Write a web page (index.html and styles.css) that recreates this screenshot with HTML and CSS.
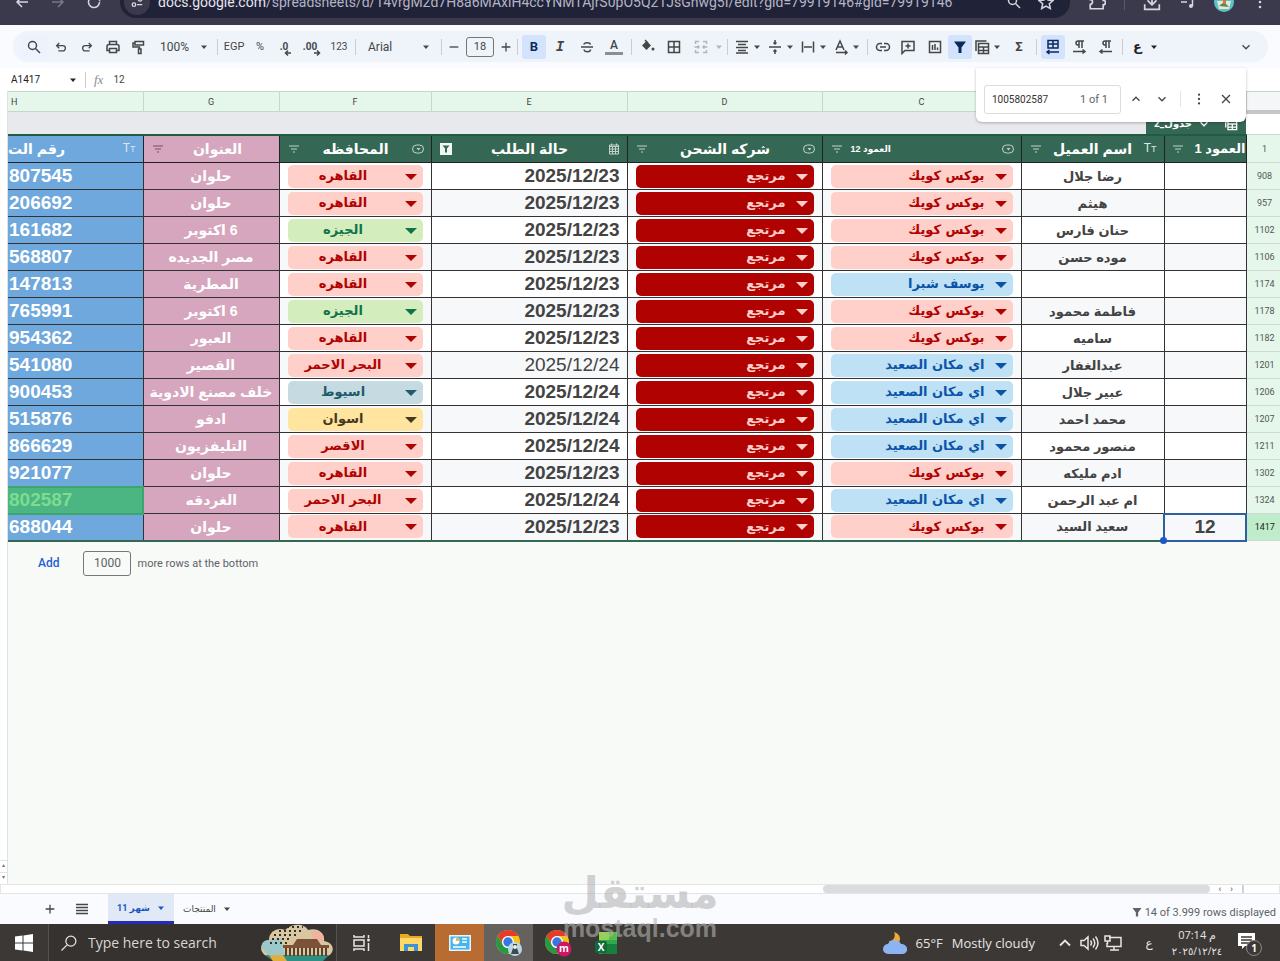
FILE: index.html
```html
<!DOCTYPE html>
<html lang="en">
<head>
<meta charset="utf-8">
<title>Orders sheet</title>
<link rel="stylesheet" href="styles.css">
</head>
<body>
<svg class="defs" aria-hidden="true">
  <symbol id="search" viewBox="0 0 16 16"><circle cx="6.5" cy="6.5" r="4"/><path d="M9.5 9.5L14 14"/></symbol>
  <symbol id="undo" viewBox="0 0 16 16"><path d="M6 3.500L3 6.500L6 9.500M3.500 6.500H10a3 3 0 0 1 0 6H5"/></symbol>
  <symbol id="redo" viewBox="0 0 16 16"><path d="M10 3.500L13 6.500L10 9.500M12.500 6.500H6a3 3 0 0 0 0 6H11"/></symbol>
  <symbol id="print" viewBox="0 0 16 16"><path d="M4.500 5.500V2.500h7v3M4.500 11.500h-2.500v-4q0-2 2-2h8q2 0 2 2v4h-2.500M4.500 9.500h7v4h-7z"/></symbol>
  <symbol id="paint" viewBox="0 0 16 16"><path d="M4 2.500h8.500v3.500h-8.500zM4 4H2v4h6.500v2M7.500 10h2.500v4.500h-2.500z"/></symbol>
  <symbol id="caret" viewBox="0 0 8 8"><path class="solid" d="M1 2.500h6L4 6z"/></symbol>
  <symbol id="minus" viewBox="0 0 16 16"><path d="M3 8h10"/></symbol>
  <symbol id="plus" viewBox="0 0 16 16"><path d="M3 8h10M8 3v10"/></symbol>
  <symbol id="strike" viewBox="0 0 16 16"><path d="M2 8h12M11.500 5.500C11 3 5 3 5 5.500M5 10.500c.5 3 6.500 3 6.500 0"/></symbol>
  <symbol id="fill" viewBox="0 0 16 16"><path class="solid" d="M2 6.500l4.500-4.500 4.500 4.500-4.500 4.500z"/><path d="M5 1l3 3"/><circle class="solid" cx="13" cy="10" r="1.500"/></symbol>
  <symbol id="grid" viewBox="0 0 16 16"><path d="M2.500 2.500h11v11h-11zM8 2.500v11M2.500 8h11"/></symbol>
  <symbol id="merge" viewBox="0 0 16 16"><path d="M6 2.500H2.500V5M2.500 11v2.500H6M10 2.500h3.500V5M13.500 11v2.500H10M1.500 8H6M4.500 6.500L6 8L4.500 9.500M14.500 8H10M11.500 6.500L10 8l1.500 1.500"/></symbol>
  <symbol id="align" viewBox="0 0 16 16"><path d="M2 2.500h12M4 5.500h8M2 8.500h12M4 11.500h8M2 14h12"/></symbol>
  <symbol id="valign" viewBox="0 0 16 16"><path d="M2 8h12M8 1v4M6.500 3.500L8 5l1.500-1.500M8 15v-4M6.500 12.500L8 11l1.500 1.500"/></symbol>
  <symbol id="wrap" viewBox="0 0 16 16"><path d="M2.500 2.500v11M13.500 2.500v11M4 8h8"/></symbol>
  <symbol id="rotate" viewBox="0 0 16 16"><path d="M3 11l4-9 4 9M4.500 8h5M3 13.500h11M12 11.500l2 2l-2 2"/></symbol>
  <symbol id="link" viewBox="0 0 16 16"><path d="M7 4.500H5a3.500 3.500 0 0 0 0 7H7M9 4.500h2a3.500 3.500 0 0 1 0 7H9M5 8h6"/></symbol>
  <symbol id="comment" viewBox="0 0 16 16"><path d="M2 2.500h12v9H5l-3 3zM8 4.500v5M5.500 7h5"/></symbol>
  <symbol id="chart" viewBox="0 0 16 16"><path d="M2.500 2.500h11v11h-11zM5.500 6v5M8 5v6M10.500 8.500V11"/></symbol>
  <symbol id="funnel" viewBox="0 0 16 16"><path class="solid" d="M2 2.500h12L9.500 8.500V14h-3V8.500z"/></symbol>
  <symbol id="tables" viewBox="0 0 16 16"><path d="M4.500 4.500h10v10h-10zM4.500 8h10M4.500 11.500h10M9.500 8v6.500M2 12V2h10.500"/></symbol>
  <symbol id="rtlsheet" viewBox="0 0 16 16"><path d="M3 1.500h10v7.500H3zM8 1.500V9M3 5h10M2 13h12M4.500 11L2 13l2.500 2"/></symbol>
  <symbol id="paraR" viewBox="0 0 16 16"><path d="M8 9V2M11 9V2M13 2H7a2 2 0 0 0 0 4H8M2 12.500h12M11.500 10.500l2.500 2l-2.500 2"/></symbol>
  <symbol id="paraL" viewBox="0 0 16 16"><path d="M8 9V2M11 9V2M13 2H7a2 2 0 0 0 0 4H8M2 12.500h12M4.500 10.500L2 12.500l2.500 2"/></symbol>
  <symbol id="down" viewBox="0 0 16 16"><path d="M4 6l4 4 4-4"/></symbol>
  <symbol id="up" viewBox="0 0 16 16"><path d="M4 10l4-4 4 4"/></symbol>
  <symbol id="dots" viewBox="0 0 16 16"><circle class="solid" cx="8" cy="3" r="1.300"/><circle class="solid" cx="8" cy="8" r="1.300"/><circle class="solid" cx="8" cy="13" r="1.300"/></symbol>
  <symbol id="close" viewBox="0 0 16 16"><path d="M3.500 3.500l9 9M12.500 3.500l-9 9"/></symbol>
  <symbol id="lines" viewBox="0 0 16 16"><path d="M2 3.500h12M2 6.500h12M2 9.500h12M2 12.500h12"/></symbol>
  <symbol id="sort" viewBox="0 0 12 12"><path d="M1 3h10M3 6h6M5 9h2"/></symbol>
  <symbol id="chipicon" viewBox="0 0 12 12"><rect x=".5" y="2" width="11" height="8" rx="4"/><path class="solid" d="M4.500 5h4L6.500 7.500z"/></symbol>
  <symbol id="boxfunnel" viewBox="0 0 12 12"><path class="solid" fill-rule="evenodd" d="M0 0h12v12H0zM2.500 2.500l2.500 3v4h2v-4l2.500-3z"/></symbol>
  <symbol id="cal" viewBox="0 0 12 12"><path d="M1.500 2h9v9h-9zM1.500 3.500h9M1.500 6h9M1.500 8.500h9M4.500 4v7M7.500 4v7M3.500 .5v2M8.500 .5v2"/></symbol>
  <symbol id="back" viewBox="0 0 16 16"><path d="M14 8H3M8 3L3 8l5 5"/></symbol>
  <symbol id="fwd" viewBox="0 0 16 16"><path d="M2 8h11M8 3l5 5-5 5"/></symbol>
  <symbol id="reload" viewBox="0 0 16 16"><path d="M13.500 8a5.500 5.500 0 1 1-2-4.200L13.500 6V2"/></symbol>
  <symbol id="tune" viewBox="0 0 16 16"><path d="M2 5h6M8 11h6"/><circle cx="11.500" cy="5" r="2"/><circle cx="4.500" cy="11" r="2"/></symbol>
  <symbol id="star" viewBox="0 0 16 16"><path d="M8 1.500l2 4.500 5 .5-3.700 3.200L12.300 14.500 8 12l-4.300 2.500 1-4.800L1 6.500 6 6z"/></symbol>
  <symbol id="ext" viewBox="0 0 16 16"><path d="M2 14V10a2 2 0 0 0 0-4V3h4a2 2 0 0 1 4 0h3.500v3.500a2 2 0 0 1 0 4V14z"/></symbol>
  <symbol id="download" viewBox="0 0 16 16"><path d="M8 1v9M4 6.500l4 4 4-4M1.500 10v4.500h13V10"/></symbol>
  <symbol id="media" viewBox="0 0 16 16"><path d="M1 4h8M1 8h6M12.500 12V4h3"/><circle class="solid" cx="11" cy="12" r="2"/></symbol>
  <symbol id="chrome" viewBox="0 0 26 26"><circle cx="13" cy="13" r="12" fill="#fbc116"/><path fill="#e33b2e" d="M2.600 7A12 12 0 0 1 23.400 7H13a6 6 0 0 0-5.500 8z"/><path fill="#269848" d="M2.600 7A12 12 0 0 0 13 25l5-8.500a6 6 0 0 1-10.200-.5z"/><circle cx="13" cy="13" r="6" fill="#fff"/><circle cx="13" cy="13" r="4.700" fill="#3578e5"/></symbol>
</svg>

<header class="browser">
  <div class="browser-row">
    <button class="nav" aria-label="Back"><svg class="ic i16"><use href="#back"/></svg></button>
    <button class="nav dim" aria-label="Forward"><svg class="ic i16"><use href="#fwd"/></svg></button>
    <button class="nav" aria-label="Reload"><svg class="ic i16"><use href="#reload"/></svg></button>
    <div class="address">
      <span class="site"><svg class="ic i14"><use href="#tune"/></svg></span>
      <span class="url"><b>docs.google.com</b>/spreadsheets/d/14vrgM2d7H8a6MAxiH4ccYNMTAjrS0pO5Q21JsGhwg5I/edit?gid=79919146#gid=79919146</span>
      <svg class="ic i16"><use href="#search"/></svg>
      <svg class="ic i16"><use href="#star"/></svg>
    </div>
    <div class="browser-tools">
      <svg class="ic i18"><use href="#ext"/></svg>
      <i class="bar"></i>
      <svg class="ic i18"><use href="#download"/></svg>
      <svg class="ic i16"><use href="#media"/></svg>
      <svg class="avatar" viewBox="0 0 20 20"><circle cx="10" cy="10" r="10" fill="#56c5c9"/><path d="M3 9h14l-2 8H5z" fill="#e9e5d6"/><path d="M5 14l5-4 5 5z" fill="#5c8a4d"/><path d="M9 6h3v6H9z" fill="#c6784c"/></svg>
      <svg class="ic i16"><use href="#dots"/></svg>
    </div>
  </div>
</header>

<nav class="toolbar-wrap">
  <div class="toolbar">
    <button class="w28 find-menu" aria-label="Search menus"><svg class="ic i16"><use href="#search"/></svg></button>
    <button class="w26" aria-label="Undo"><svg class="ic i14"><use href="#undo"/></svg></button>
    <button class="w26" aria-label="Redo"><svg class="ic i14"><use href="#redo"/></svg></button>
    <button class="w26" aria-label="Print"><svg class="ic i16"><use href="#print"/></svg></button>
    <button class="w26" aria-label="Paint format"><svg class="ic i16"><use href="#paint"/></svg></button>
    <button class="menu zoom">100% <svg class="ic i8"><use href="#caret"/></svg></button>
    <i class="sep"></i>
    <button class="w24 sm">EGP</button>
    <button class="w28 sm">%</button>
    <button class="w24 dec" aria-label="Decrease decimal places">.0<svg class="ic i8"><use href="#back"/></svg></button>
    <button class="w28 dec" aria-label="Increase decimal places">.00<svg class="ic i8"><use href="#fwd"/></svg></button>
    <button class="w26 xs">123</button>
    <i class="sep"></i>
    <button class="menu font">Arial <svg class="ic i8"><use href="#caret"/></svg></button>
    <i class="sep"></i>
    <button class="w16" aria-label="Decrease font size"><svg class="ic i14"><use href="#minus"/></svg></button>
    <input class="size" aria-label="Font size" value="18">
    <button class="w16" aria-label="Increase font size"><svg class="ic i14"><use href="#plus"/></svg></button>
    <i class="sep"></i>
    <button class="w24 on"><b>B</b></button>
    <button class="w28 ital">I</button>
    <button class="w26" aria-label="Strikethrough"><svg class="ic i16"><use href="#strike"/></svg></button>
    <button class="w28"><span class="color-a">A</span></button>
    <i class="sep"></i>
    <button class="w24" aria-label="Fill color"><svg class="ic i16"><use href="#fill"/></svg></button>
    <button class="w28" aria-label="Borders"><svg class="ic i16"><use href="#grid"/></svg></button>
    <button class="w26 off" aria-label="Merge cells"><svg class="ic i16"><use href="#merge"/></svg></button>
    <button class="w10 off" aria-label="Merge type"><svg class="ic i8"><use href="#caret"/></svg></button>
    <i class="sep"></i>
    <button class="combo" aria-label="Horizontal align"><svg class="ic i16"><use href="#align"/></svg><svg class="ic i8"><use href="#caret"/></svg></button>
    <button class="combo" aria-label="Vertical align"><svg class="ic i16"><use href="#valign"/></svg><svg class="ic i8"><use href="#caret"/></svg></button>
    <button class="combo" aria-label="Text wrapping"><svg class="ic i16"><use href="#wrap"/></svg><svg class="ic i8"><use href="#caret"/></svg></button>
    <button class="combo" aria-label="Text rotation"><svg class="ic i16"><use href="#rotate"/></svg><svg class="ic i8"><use href="#caret"/></svg></button>
    <i class="sep"></i>
    <button class="w22" aria-label="Insert link"><svg class="ic i16"><use href="#link"/></svg></button>
    <button class="w28" aria-label="Insert comment"><svg class="ic i16"><use href="#comment"/></svg></button>
    <button class="w26" aria-label="Insert chart"><svg class="ic i16"><use href="#chart"/></svg></button>
    <button class="w24 on" aria-label="Filter"><svg class="ic i16"><use href="#funnel"/></svg></button>
    <button class="combo end" aria-label="Table views"><svg class="ic i16"><use href="#tables"/></svg><svg class="ic i8"><use href="#caret"/></svg></button>
    <button class="w28"><b>Σ</b></button>
    <i class="sep"></i>
    <button class="w24 on" aria-label="Sheet direction"><svg class="ic i16"><use href="#rtlsheet"/></svg></button>
    <button class="w28" aria-label="Left to right"><svg class="ic i16"><use href="#paraR"/></svg></button>
    <button class="w26" aria-label="Right to left"><svg class="ic i16"><use href="#paraL"/></svg></button>
    <i class="sep"></i>
    <button class="combo input-tools"><b>ع</b><svg class="ic i8"><use href="#caret"/></svg></button>
    <button class="w24 more" aria-label="Hide the menus"><svg class="ic i14"><use href="#down"/></svg></button>
  </div>
</nav>

<div class="formula">
  <button class="name-box">A1417 <svg class="ic i8"><use href="#caret"/></svg></button>
  <i class="sep"></i>
  <label class="fx" for="formula">fx</label>
  <input id="formula" class="formula-input" value="12">
</div>

<main class="sheet">
  <div class="gutter"><span>▴</span><span>▾</span></div>
  <div class="canvas">
    <table class="grid">
      <colgroup><col class="cH"><col class="cG"><col class="cF"><col class="cE"><col class="cD"><col class="cC"><col class="cB"><col class="cA"><col class="cN"></colgroup>
      <thead>
        <tr class="letters"><th class="first">H</th><th>G</th><th>F</th><th>E</th><th>D</th><th>C</th><th></th><th></th><th class="corner"></th></tr>
        <tr class="spacer"><td colspan="8"><div class="table-tab"><span dir="rtl">جدول_2</span><svg class="ic i14"><use href="#down"/></svg><svg class="ic i14 tab-grid"><use href="#tables"/></svg></div></td><td class="blank"></td></tr>
        <tr class="heads">
          <th class="blue"><div class="head"><span class="cut" dir="rtl">رقم الت</span><span class="tt">T<small>T</small></span></div></th>
          <th class="pink"><div class="head"><svg class="ic i12"><use href="#sort"/></svg><span>العنوان</span></div></th>
          <th><div class="head"><svg class="ic i12"><use href="#sort"/></svg><span>المحافظه</span><svg class="ic i12"><use href="#chipicon"/></svg></div></th>
          <th><div class="head"><svg class="ic i12 bright"><use href="#boxfunnel"/></svg><span>حالة الطلب</span><svg class="ic i12"><use href="#cal"/></svg></div></th>
          <th><div class="head"><svg class="ic i12"><use href="#sort"/></svg><span>شركه الشحن</span><svg class="ic i12"><use href="#chipicon"/></svg></div></th>
          <th><div class="head"><svg class="ic i12"><use href="#sort"/></svg><span class="little" dir="rtl">العمود 12</span><svg class="ic i12"><use href="#chipicon"/></svg></div></th>
          <th><div class="head"><svg class="ic i12"><use href="#sort"/></svg><span>اسم العميل</span><span class="tt">T<small>T</small></span></div></th>
          <th><div class="head tight"><svg class="ic i12"><use href="#sort"/></svg><span dir="rtl">العمود 1</span></div></th>
          <th class="num">1</th>
        </tr>
      </thead>
      <tbody id="rows"></tbody>
    </table>
    <form class="add-rows">
      <button type="button">Add</button>
      <input id="count" value="1000">
      <label for="count">more rows at the bottom</label>
    </form>
  </div>
  <section class="finder" aria-label="Find in sheet">
    <label class="find-box"><input aria-label="Find" value="1005802587"><span>1 of 1</span></label>
    <button aria-label="Previous"><svg class="ic i14"><use href="#up"/></svg></button>
    <button aria-label="Next"><svg class="ic i14"><use href="#down"/></svg></button>
    <i class="sep"></i>
    <button aria-label="More options"><svg class="ic i14"><use href="#dots"/></svg></button>
    <button aria-label="Close"><svg class="ic i14"><use href="#close"/></svg></button>
  </section>
</main>

<div class="hscroll"><div class="thumb"></div><span>‹</span><span>›</span><i></i></div>

<footer class="tabs">
  <button class="tool" aria-label="Add sheet"><svg class="ic i14"><use href="#plus"/></svg></button>
  <button class="tool" aria-label="All sheets"><svg class="ic i16"><use href="#lines"/></svg></button>
  <button class="tab active"><span dir="rtl">شهر 11</span><svg class="ic i8"><use href="#caret"/></svg></button>
  <button class="tab"><span>المنتجات</span><svg class="ic i8"><use href="#caret"/></svg></button>
  <p class="count"><svg class="ic i12"><use href="#funnel"/></svg>14 of 3.999 rows displayed</p>
</footer>

<footer class="taskbar">
  <button class="start" aria-label="Start"><svg viewBox="0 0 18 18"><path fill="#fff" d="M0 2.500l7.500-1V8.500H0zM8.500 1.400L18 0v8.500H8.500zM0 9.500h7.500v7L0 15.500zM8.500 9.500H18V18l-9.500-1.400z"/></svg></button>
  <label class="task-search"><svg class="ic i20 flip"><use href="#search"/></svg><input aria-label="Search" placeholder="Type here to search">
    <svg class="art" viewBox="0 0 72 37"><path fill="#d9c7a1" d="M8 33C-3 30-2 17 8 16 8 7 17 3 24 6 32-2 44 0 47 6c10-3 17 3 16 11 12 2 11 14 1 16z"/><path fill="#9cc7cb" d="M1 24c-1-6 3-8 7-8l12-2 4 18H8z"/><path fill="#efb3a0" d="M50 8c8-3 14 2 13 9l-10 1z"/><path fill="#2f8f83" d="M4 31h64l-6 6H12z"/><path fill="#e0ad3e" d="M8 31h14l4 6H12z"/><path fill="#7b5137" d="M36 15h20l4 6h8v3H22v-3h10z"/><path stroke="#5b3e2c" stroke-width="2" d="M25 24v8M29 24v8M33 24v8M37 24v8M41 24v8M45 24v8M49 24v8M53 24v8M57 24v8M61 24v8M65 24v8"/><path stroke="#33302c" stroke-width="2" stroke-dasharray="2 3" d="M9 19h18M11 15h20M13 11h24M18 7h24M26 3h16"/></svg>
  </label>
  <div class="apps">
    <button aria-label="Task view"><svg class="ic i20" viewBox="0 0 20 20"><path d="M2 2v2h10V2M2 7h10v6H2zM2 18v-2h10v2M16.500 2v3M16.500 10v8"/><circle class="solid" cx="16.500" cy="7" r="1.500"/></svg></button>
    <button aria-label="File Explorer"><svg class="i24" viewBox="0 0 24 24"><path fill="#e9a820" d="M1 3h8l2 2h12v5H1z"/><path fill="#ffd766" d="M1 7h22v13H1z"/><path fill="#3a94d6" d="M5 20v-7h14v7h-4v-4H9v4z"/></svg></button>
    <button class="orange" aria-label="Control Panel"><svg class="i24" viewBox="0 0 24 24"><path fill="#e4f5ff" d="M1 4h22v16H1z"/><path fill="#45b5ed" d="M2.500 5.500h19v13h-19z"/><circle cx="8" cy="10" r="3.500" fill="#fff"/><path fill="#f4b63f" d="M8 10V6.500A3.500 3.500 0 0 1 11.500 10z"/><path stroke="#fff" stroke-width="1.500" d="M14 8h5M14 11h5M5 16h13"/></svg></button>
    <button class="lit" aria-label="Chrome"><svg class="i28" viewBox="0 0 28 28"><use href="#chrome" width="26" height="26"/><circle cx="20" cy="20" r="7" fill="#b9d7e4"/><path fill="#3e4a50" d="M18 15h4v4l2 6h-8l2-6z"/><circle cx="20" cy="18" r="2" fill="#f4f1e6"/></svg></button>
    <button aria-label="Chrome, second profile"><svg class="i28" viewBox="0 0 28 28"><use href="#chrome" width="26" height="26"/><circle cx="20" cy="20" r="7.500" fill="#cf1665"/><text x="20" y="23" text-anchor="middle" class="badge">m</text></svg></button>
    <button aria-label="Excel"><svg class="i28" viewBox="0 0 28 28"><path fill="#2fa84f" d="M6 3h18v22H6z"/><path fill="#8fd44a" d="M6 3h10v8H6z"/><path fill="#57bd45" d="M16 3h8v8h-8z"/><path fill="#16803c" d="M14 15h10v10H8z"/><rect x="2" y="12" width="12" height="12" rx="2" fill="#12693a"/><text x="8" y="22" text-anchor="middle" class="badge">X</text></svg></button>
  </div>
  <div class="tray">
    <svg class="weather" viewBox="0 0 26 26"><path fill="#f2a93b" d="M12 2c2 4 0 9-5 9 2 5 11 4 11-2 0-4-3-6-6-7z"/><path fill="#8db4f2" d="M6 24a5 5 0 0 1 0-10c2-5 11-5 13 0 8 0 8 10 1 10z"/></svg>
    <span>65°F</span><span class="outlook">Mostly cloudy</span>
    <svg class="ic i20"><use href="#up"/></svg>
    <svg class="ic i20" viewBox="0 0 20 20"><path d="M2 7.500h3L9 4v12l-4-3.500H2zM11.500 7.500q2 2.500 0 5M14 5.500q3.500 4.500 0 9M16.500 3.500q5 6.500 0 13"/></svg>
    <svg class="ic i20" viewBox="0 0 20 20"><path d="M6 4.500h12v9H4V10M11 13.500v3M7 17h9M2 3h5v5H2zM4.500 8v3"/></svg>
    <span class="lang">ع</span>
    <div class="clock"><span dir="rtl">م 07:14</span><span>٢٠٢٥/١٢/٢٤</span></div>
    <svg class="notes" viewBox="0 0 26 26"><path fill="#fff" d="M1 3h17v13H8l-3 3v-3H1z"/><path stroke="#3b3835" stroke-width="1.500" d="M4 7h11M4 10h11M4 13h8"/><circle cx="17" cy="18" r="7.500" fill="#3b3835" stroke="#8b8986"/><text x="17" y="22" text-anchor="middle" class="badge">1</text></svg>
  </div>
</footer>

<div class="watermark" aria-hidden="true"><span class="wm-ar">مستقل</span><span class="wm-en">mostaql.com</span></div>
<script src="rows.js"></script>
</body>
</html>
```
FILE: rows.js
```js
// phone, address, governorate, date, courier, customer, cell A, row number
const BOX = 'بوكس كويك', UPPER = 'اي مكان الصعيد', CAIRO = 'القاهره', GIZA = 'الجيزه', SEA = 'البحر الاحمر';
const orders = [
  ['807545', 'حلوان', CAIRO, 23, BOX, 'رضا جلال', '', 908],
  ['206692', 'حلوان', CAIRO, 23, BOX, 'هيثم', '', 957],
  ['161682', '6 اكتوبر', GIZA, 23, BOX, 'حنان فارس', '', 1102],
  ['568807', 'مصر الجديده', CAIRO, 23, BOX, 'موده حسن', '', 1106],
  ['147813', 'المطرية', CAIRO, 23, 'يوسف شبرا', '', '', 1174],
  ['765991', '6 اكتوبر', GIZA, 23, BOX, 'فاطمة محمود', '', 1178],
  ['954362', 'العبور', CAIRO, 23, BOX, 'ساميه', '', 1182],
  ['541080', 'القصير', SEA, 24, UPPER, 'عبدالغفار', '', 1201],
  ['900453', 'خلف مصنع الادوية', 'اسيوط', 24, UPPER, 'عبير جلال', '', 1206],
  ['515876', 'ادفو', 'اسوان', 24, UPPER, 'محمد احمد', '', 1207],
  ['866629', 'التليفزيون', 'الاقصر', 24, UPPER, 'منصور محمود', '', 1211],
  ['921077', 'حلوان', CAIRO, 23, BOX, 'ادم مليكه', '', 1302],
  ['802587', 'الغردقه', SEA, 24, UPPER, 'ام عبد الرحمن', '', 1324],
  ['688044', 'حلوان', CAIRO, 23, BOX, 'سعيد السيد', '12', 1417]
];
const tone = { [GIZA]: 'green', 'اسيوط': 'teal', 'اسوان': 'yellow', [UPPER]: 'azure', 'يوسف شبرا': 'azure' };

function chip(value, label, extra) {
  return `<div class="chip ${extra}"><select dir="rtl" aria-label="${label}"><option>${value}</option></select></div>`;
}

document.getElementById('rows').innerHTML = orders.map(([phone, area, gov, day, place, name, a, n]) => `
  <tr>
    <td class="blue${phone === '802587' ? ' found' : ''}">${phone}</td>
    <td class="pink" dir="rtl">${area}</td>
    <td>${chip(gov, 'المحافظه', 'mid ' + (tone[gov] || 'rose'))}</td>
    <td class="date${phone === '541080' ? ' plain' : ''}">2025/12/${day}</td>
    <td>${chip('مرتجع', 'شركه الشحن', 'red')}</td>
    <td>${chip(place, 'العمود 12', tone[place] || 'rose')}</td>
    <td class="name" dir="rtl">${name}</td>
    <td class="cell-a${a ? ' selected' : ''}">${a}</td>
    <td class="num${a ? ' current' : ''}">${n}</td>
  </tr>`).join('');
```
FILE: styles.css
```css
* { box-sizing: border-box; }
body {
  margin: 0;
  min-height: 100vh;
  display: flex;
  flex-direction: column;
  background: #f9fbfe;
  color: #444746;
  font-family: Roboto, "DejaVu Sans", sans-serif;
  font-size: 12px;
  overflow: hidden;
}
button, input, select { font: inherit; color: inherit; border: 0; background: none; padding: 0; margin: 0; }
.defs { display: none; }
.ic { fill: none; stroke: currentColor; stroke-width: 1.5; flex: none; }
.ic .solid, .solid { fill: currentColor; stroke: none; }
.i8 { width: 8px; height: 8px; }
.i12 { width: 12px; height: 12px; }
.i14 { width: 14px; height: 14px; }
.i16 { width: 16px; height: 16px; }
.i18 { width: 18px; height: 18px; }
.i20 { width: 20px; height: 20px; }
.i24 { width: 24px; height: 24px; }
.i28 { width: 28px; height: 28px; }

/* Browser bar */
.browser { height: 25px; overflow: hidden; background: #3b3a4c; color: #d6d6e0; flex: none; }
.browser-row { display: flex; align-items: center; height: 32px; margin-top: -14px; padding: 0 12px 0 4px; }
.nav { width: 36px; height: 24px; display: flex; align-items: center; justify-content: center; }
.dim { color: #77778a; }
.address { flex: 1; height: 32px; margin-left: 8px; padding: 0 16px 0 4px; border-radius: 16px; background: #202238; display: flex; align-items: center; gap: 16px; }
.site { width: 26px; height: 26px; border-radius: 50%; background: #3b3a4c; display: flex; align-items: center; justify-content: center; }
.url { flex: 1; margin-left: -8px; font-size: 14px; color: #b4b5c4; white-space: nowrap; }
.url b { font-weight: 400; color: #e6e6ee; }
.browser-tools { width: 198px; padding-left: 18px; display: flex; align-items: center; justify-content: space-between; }
.bar { width: 1px; height: 16px; background: #5a596c; }
.avatar { width: 20px; height: 20px; }

/* Toolbar */
.toolbar-wrap { padding: 6px 12px 6px 13px; flex: none; }
.toolbar { height: 31px; border-radius: 16px; background: #eff3fa; padding: 0 10px 0 7px; display: flex; align-items: center; }
.toolbar button { height: 24px; flex: none; display: flex; align-items: center; justify-content: center; border-radius: 3px; }
.toolbar .w10 { width: 10px; }
.toolbar .w16 { width: 16px; }
.toolbar .w22 { width: 22px; }
.toolbar .w24 { width: 24px; }
.toolbar .w26 { width: 26px; }
.toolbar .w28 { width: 28px; }
.toolbar .find-menu { background: #edf2fc; }
.toolbar .menu { justify-content: space-between; }
.toolbar .zoom { width: 62px; padding: 0 6px 0 8px; }
.toolbar .font { width: 78px; padding: 0 8px; }
.toolbar .sm { font-size: 11px; }
.toolbar .xs { font-size: 10px; }
.toolbar .dec { font-size: 10px; font-weight: 700; }
.dec svg { align-self: flex-end; margin: 0 0 2px -4px; stroke-width: 3; }
.sep { width: 1px; height: 16px; margin: 0 4px 0 3px; background: #c9ccd1; flex: none; }
.toolbar .on { background: #d3e3fd; color: #0b2a5c; }
.toolbar b { font-size: 13px; }
.toolbar .ital { font: italic 700 14px "Liberation Mono", monospace; }
.toolbar .off { color: #b3b6ba; }
.color-a { border-bottom: 3px solid #8b8e92; width: 18px; line-height: 13px; font-weight: 500; }
.size { width: 28px; height: 20px; margin: 0 4px; border: 1px solid #747775; border-radius: 3px; text-align: center; font-size: 11px; }
.toolbar .combo { width: 33px; gap: 3px; justify-content: flex-start; padding-left: 2px; }
.toolbar .end { justify-content: flex-end; padding-right: 4px; }
.toolbar .input-tools { gap: 8px; padding-left: 6px; color: #222; }
.toolbar .more { margin-left: auto; }

/* Formula bar */
.formula { height: 23px; background: #fff; display: flex; align-items: center; padding-left: 11px; flex: none; }
.name-box { width: 66px; display: flex; align-items: center; justify-content: space-between; font-size: 10px; color: #222; }
.formula .sep { margin: 0 8px; }
.fx { font: italic 13px "Liberation Serif", serif; color: #8a8d91; }
.formula-input { width: 200px; margin-left: 10px; font-size: 10px; }

/* Sheet */
.sheet { position: relative; flex: 1; display: flex; min-height: 0; }
.gutter { width: 8px; background: #fff; border-right: 1px solid #dfe1e3; display: flex; flex-direction: column; justify-content: flex-end; font-size: 6px; text-align: center; color: #777; }
.gutter span { height: 12px; border-top: 1px solid #e1e3e6; }
.canvas { flex: 1; background: #f7faf7; min-width: 0; }
.grid { width: 100%; table-layout: fixed; border-collapse: collapse; }
.cH { width: 135px; } .cG { width: 136px; } .cF { width: 152px; } .cE { width: 196px; } .cD { width: 195px; }
.cC { width: 199px; } .cB { width: 143px; } .cA { width: 82px; } .cN { width: 34px; }
.grid th, .grid td { padding: 0; height: 27px; overflow: hidden; white-space: nowrap; }
.letters th { height: 20px; background: #e4f7ea; border: 1px solid #c8d5cc; border-left: 0; font-size: 9px; font-weight: 400; color: #444; }
.grid .letters .first { text-align: left; padding-left: 3px; }
.letters .corner { background: #f5f6f8; border-bottom: 4px solid #c4c6c9; }
.grid .spacer td { height: 23px; background: #e8e9ed; vertical-align: bottom; }
.grid .spacer .blank { background: #fff; }
.table-tab { width: 100px; height: 20px; margin-left: auto; background: #356854; color: #fff; display: flex; align-items: center; justify-content: space-between; padding: 0 8px; font-size: 10px; font-weight: 700; }
.tab-grid { margin-left: 8px; }
.grid .heads th { height: 28px; background: #356854; color: #fff; border: 1px solid #222; border-top: 2px solid #205c40; font: 700 14px "Liberation Sans", "DejaVu Sans", sans-serif; }
.head { display: flex; align-items: center; padding: 0 7px 0 8px; line-height: 20px; }
.head span { flex: 1; text-align: center; }
.head .ic { color: #c3d3cb; stroke-width: 1; }
.head .bright { color: #f1f6f3; }
.head .cut { text-align: left; }
.head .little { font-size: 9px; text-align: left; padding-left: 8px; }
.head .tt { flex: none; font-weight: 400; font-size: 12px; color: #dde6f0; }
.tt small { font-size: 9px; }
.head.tight { padding: 0 0 0 7px; }
.head.tight span { text-align: right; font-size: 13px; }
.grid .heads .blue, .grid td.blue { background: #6fa8dc; }
.grid .heads .pink, .grid td.pink { background: #d5a6bd; }
.heads .blue .head { padding-left: 0; }
.heads .pink .ic { color: #7b4f65; }
tbody td { border: 1px solid #333; background: #fff; text-align: center; font: 700 14px "Liberation Sans", "DejaVu Sans", sans-serif; color: #434343; }
tbody tr:nth-child(even) td { background: #f6f8f9; }
.grid .blue, .grid tr > :first-child { border-left: 0; }
.grid tbody td.blue { color: #fff; font-size: 19px; text-align: left; padding-left: 1px; }
.grid tbody td.pink { color: #fff; }
.grid tbody tr td.found { background: #4bb682; color: #7ddc90; border: 2px solid #3fa56f; border-left: 0; }
.grid tbody .date { font-size: 19px; text-align: right; padding-right: 7px; }
.grid tbody .plain { font-weight: 400; }
.grid tbody .name { font-size: 13px; }
.grid tbody .cell-a { font-size: 19px; }
.grid tbody .selected { position: relative; overflow: visible; border: 2px solid #2f5f9e; }
.selected::after { content: ""; position: absolute; left: -5px; bottom: -4px; width: 7px; height: 7px; border-radius: 50%; background: #1b57c8; }
tbody tr:last-child td { border-bottom: 2px solid #356854; }
.grid .num, .grid tbody tr .num { background: #e4f7ea; border: 1px solid #cfd8d2; font: 400 9px Roboto, sans-serif; color: #555; padding-left: 3px; text-align: center; }
.grid .heads .num { background: #e4f7ea; border: 1px solid #cfd8d2; font: 400 9px Roboto, sans-serif; color: #555; }
.grid tbody tr .current { background: #bfecca; color: #222; }

/* Drop-down chips */
.chip { position: relative; height: 23px; margin: 0 8px; border-radius: 5px; }
.chip select { appearance: none; width: 100%; height: 23px; padding: 0 28px 0 0; display: block; font: 700 13px "DejaVu Sans", sans-serif; line-height: 20px; }
.chip.mid select { padding: 0 24px 0 0; text-align: center; text-align-last: center; }
.chip::after { content: ""; position: absolute; right: 6px; top: 9px; border: 6px solid transparent; border-top-color: currentColor; border-bottom: 0; pointer-events: none; }
.rose { background: #ffcfc9; color: #b10202; }
.red { background: #b10202; color: #ffcfc9; }
.green { background: #d4edbc; color: #11734b; }
.teal { background: #c6dbe1; color: #215a6c; }
.yellow { background: #ffe5a0; color: #473821; }
.azure { background: #bfe1f6; color: #0a53a8; }

.add-rows { display: flex; align-items: center; padding: 9px 0 0 30px; font-size: 11px; color: #5f6368; }
.add-rows button { color: #1f5fd6; font-size: 12px; font-weight: 500; }
.add-rows input { width: 48px; height: 25px; margin: 0 6px 0 24px; border: 1px solid #777; border-radius: 3px; text-align: center; font-size: 12px; }

/* Find panel floats over the sheet */
.finder { position: absolute; right: 34px; top: -23px; width: 270px; height: 54px; padding: 8px 8px 0; background: #fff; border-radius: 0 0 6px 6px; box-shadow: 0 1px 3px #0004; display: flex; align-items: center; justify-content: space-between; }
.find-box { width: 137px; height: 29px; padding: 0 12px 0 7px; border: 1px solid #dadce0; border-radius: 3px; display: flex; align-items: center; font-size: 11px; color: #5f6368; white-space: nowrap; }
.find-box input { flex: 1; min-width: 0; font-size: 10px; color: #333; }
.finder button { width: 24px; height: 24px; display: flex; align-items: center; justify-content: center; }
.finder .sep { background: #e2e4e7; }

/* Scrollbar and sheet tabs */
.hscroll { height: 10px; background: #fff; border: 1px solid #e3e5e8; display: flex; align-items: center; justify-content: flex-end; gap: 9px; padding-right: 35px; font-size: 9px; line-height: 8px; flex: none; }
.thumb { width: 387px; height: 8px; border-radius: 4px; background: #dadce0; }
.hscroll i { width: 2px; height: 8px; background: #d0d2d6; }
.tabs { height: 30px; background: #f9fbfe; display: flex; align-items: center; padding-left: 34px; flex: none; }
.tool { width: 32px; display: flex; align-items: center; justify-content: center; }
.tab { height: 30px; padding: 0 9px; display: flex; align-items: center; gap: 7px; font-size: 9px; }
.active { margin-left: 10px; background: #e1e9f7; border-bottom: 3px solid #2a2ab8; color: #1a56c4; font-weight: 700; }
.count { margin: 0 4px 0 auto; display: flex; align-items: center; gap: 2px; font-size: 11px; color: #5f6368; padding-top: 6px; }

/* Taskbar */
.taskbar { height: 37px; background: #3b3835; color: #e8e6e3; display: flex; align-items: center; flex: none; font-family: "Open Sans", "DejaVu Sans", sans-serif; }
.start { width: 48px; display: flex; justify-content: center; }
.start svg { width: 18px; height: 18px; }
.task-search { width: 289px; height: 37px; border: 1px solid #55524f; border-width: 0 1px; padding: 0 3px 0 10px; display: flex; align-items: center; gap: 9px; background: #353230; }
.flip { transform: scaleX(-1); stroke-width: 1; }
.task-search input { flex: 1; min-width: 0; font-size: 14px; }
.task-search input::placeholder { color: #d8d6d4; opacity: 1; }
.art { width: 72px; height: 37px; }
.apps { display: flex; }
.apps button { width: 49px; height: 37px; display: flex; align-items: center; justify-content: center; }
.orange { background: #b86c32; }
.lit { background: #64615f; }
.badge { font: 700 10px "Open Sans", sans-serif; fill: #fff; }
.tray { margin-left: auto; padding-right: 17px; display: flex; align-items: center; gap: 4px; font-size: 13px; }
.weather { width: 26px; height: 26px; margin-right: 4px; }
.outlook { margin: 0 16px 0 5px; }
.lang { width: 20px; margin: 0 6px 0 12px; text-align: center; font-size: 12px; }
.clock { width: 56px; display: flex; flex-direction: column; align-items: center; font-size: 11px; line-height: 16px; margin-right: 8px; }
.clock :last-child { font-size: 10px; }
.notes { width: 26px; height: 26px; }

.watermark { position: absolute; left: 50%; bottom: 20px; width: 156px; margin-left: -78px; display: flex; flex-direction: column; align-items: center; color: #b4b4b499; pointer-events: none; }
.wm-ar { font: 700 43px "DejaVu Sans", sans-serif; line-height: 44px; }
.wm-en { font: 700 25px "Liberation Sans", sans-serif; line-height: 26px; }
```
